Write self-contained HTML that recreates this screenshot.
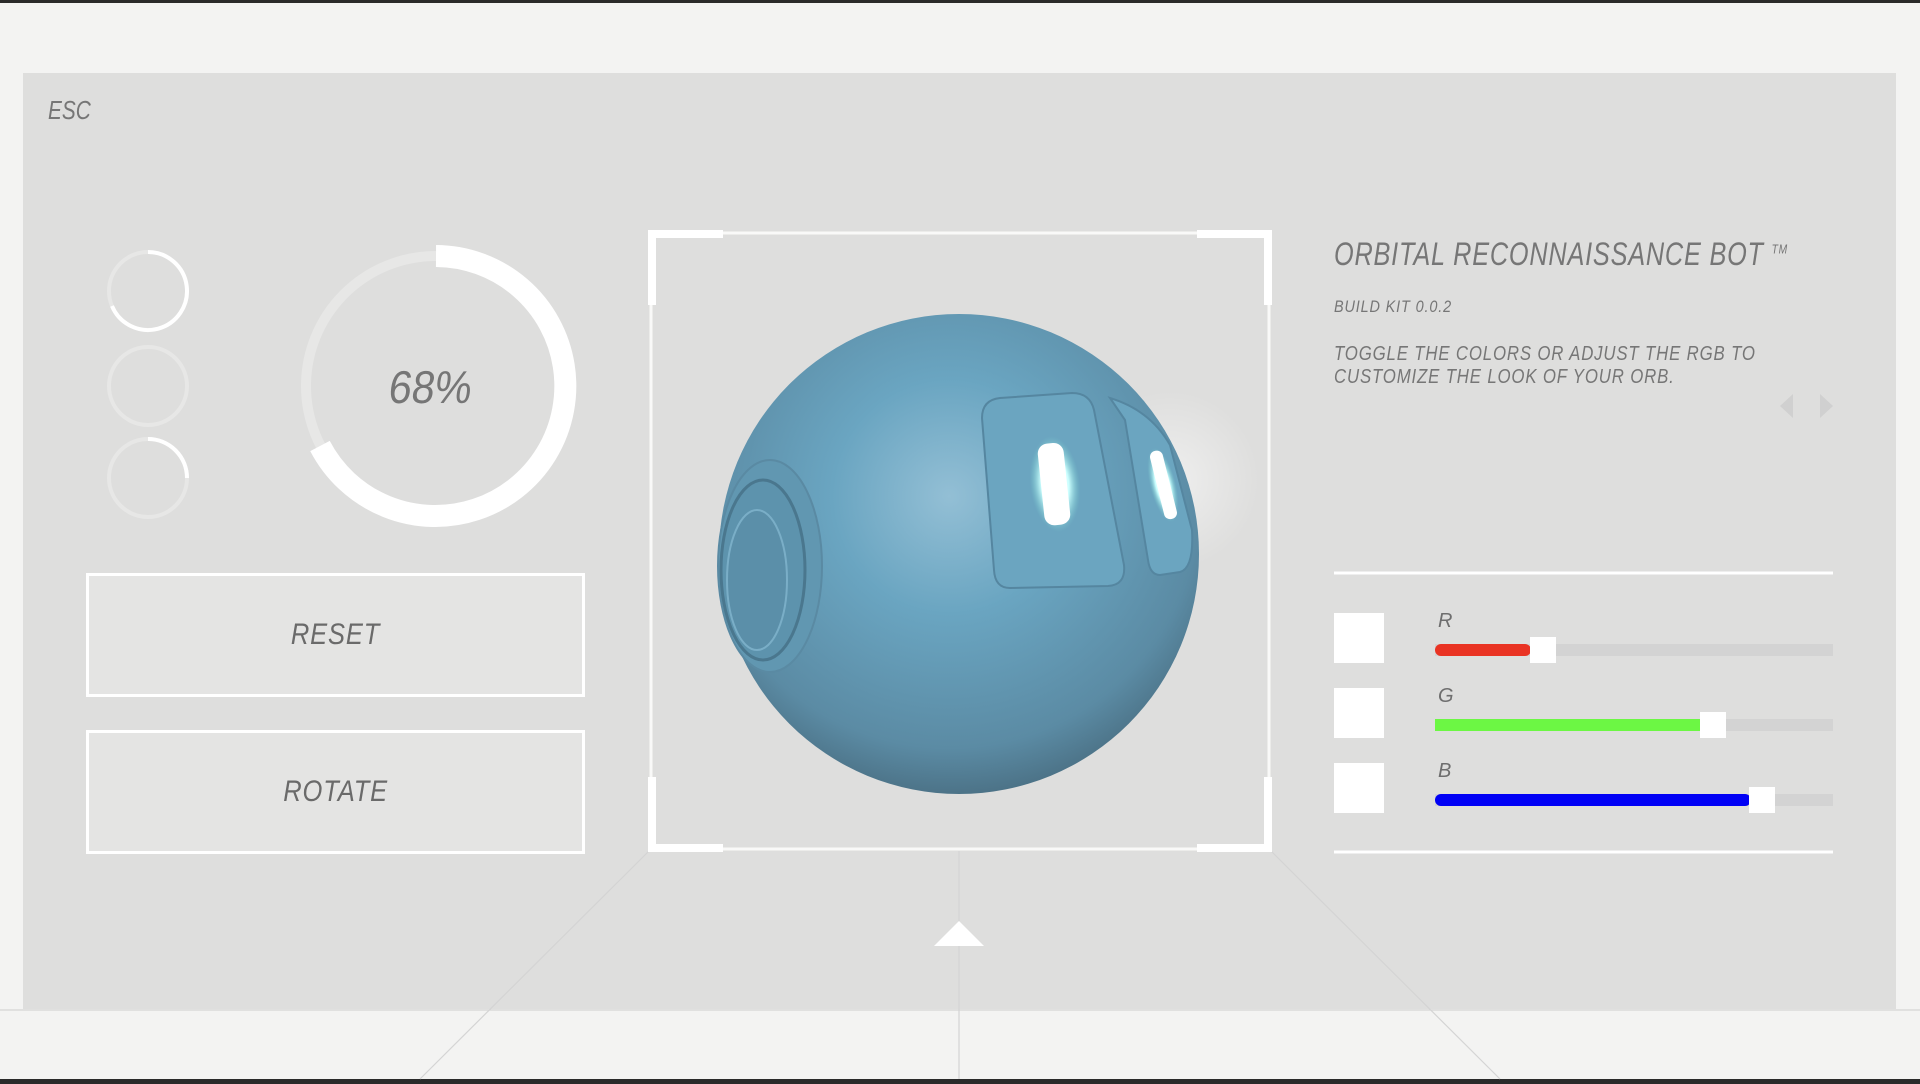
<!DOCTYPE html>
<html><head><meta charset="utf-8"><style>
*{margin:0;padding:0;box-sizing:border-box}
html,body{width:1920px;height:1084px;overflow:hidden;background:#f3f3f2;font-family:"Liberation Sans",sans-serif}
.t{position:absolute;color:#767676;font-style:italic;letter-spacing:2px;white-space:nowrap;transform-origin:left top}
.btn{position:absolute;left:86px;width:499px;height:124px;border:3px solid #fff;background:#e4e4e3;display:flex;align-items:center;justify-content:center;color:#6a6a6a;font-style:italic;font-size:30px;letter-spacing:1px}
.btn span{display:inline-block;transform:scaleX(.85)}
.sq{position:absolute;left:1334px;width:50px;height:50px;background:#fff}
.trk{position:absolute;left:1435px;width:398px;height:12px;background:#d3d3d3}
.fill{position:absolute;left:0;top:0;height:12px;border-radius:6px}
.th{position:absolute;top:-7px;width:26px;height:26px;background:#fff}
.lab{position:absolute;left:1438px;color:#6e6e6e;font-style:italic;font-size:20px}
</style></head><body>
<div style="position:absolute;left:0;top:0;width:1920px;height:3px;background:#2a2a2a"></div>
<div style="position:absolute;left:0;top:1079px;width:1920px;height:5px;background:#2a2a2a"></div>
<div style="position:absolute;left:23px;top:73px;width:1873px;height:936px;background:#dededd"></div>
<svg style="position:absolute;left:0;top:0" width="1920" height="1084">
<g stroke="#d4d4d4" stroke-width="1.2" fill="none">
<line x1="959" y1="851" x2="959" y2="1079"/>
<line x1="0" y1="1010" x2="1920" y2="1010"/>
<line x1="649" y1="851" x2="420" y2="1079"/>
<line x1="1271" y1="851" x2="1500" y2="1079"/>
</g>
<g fill="none" stroke-width="4">
<circle cx="148" cy="291" r="39" stroke="#e7e7e6"/>
<path d="M148 252 A39 39 0 1 1 112 306" stroke="#fff"/>
<circle cx="148" cy="386" r="39" stroke="#e7e7e6"/>
<circle cx="148" cy="478" r="39" stroke="#e7e7e6"/>
<path d="M148 439 A39 39 0 0 1 187 478" stroke="#fff"/>
</g>
<circle cx="436" cy="386" r="130" fill="none" stroke="#e7e7e6" stroke-width="10"/>
<path d="M436 256 A130 130 0 1 1 320 446" fill="none" stroke="#fff" stroke-width="22"/>
<g fill="none" stroke="#fff">
<rect x="651" y="233" width="618" height="616" stroke-width="3" opacity=".8"/>
<path d="M652 305 V234 H723 M1197 234 H1268 V305 M652 777 V848 H723 M1197 848 H1268 V777" stroke-width="8"/>
</g>
<polygon points="959,921 934,946 984,946" fill="#fff"/>
<defs>
<radialGradient id="sp" cx="0.48" cy="0.38" r="0.7">
<stop offset="0" stop-color="#93bfd5"/>
<stop offset="0.35" stop-color="#6aa5c1"/>
<stop offset="0.75" stop-color="#5b8ba4"/>
<stop offset="1" stop-color="#405f70"/>
</radialGradient>
<radialGradient id="gl"><stop offset="0" stop-color="#fff"/><stop offset=".55" stop-color="#cff"/><stop offset="1" stop-color="#7cc" stop-opacity="0"/></radialGradient>
<radialGradient id="halo"><stop offset="0" stop-color="#fff" stop-opacity=".5"/><stop offset="1" stop-color="#fff" stop-opacity="0"/></radialGradient>
</defs>
<circle cx="1170" cy="480" r="90" fill="url(#halo)"/>
<circle cx="959" cy="554" r="240" fill="url(#sp)"/>
<ellipse cx="770" cy="566" rx="52" ry="106" fill="#6197b1" stroke="#5a8aa3" stroke-width="2"/>
<ellipse cx="763" cy="570" rx="42" ry="90" fill="#5d93ad" stroke="#4a778e" stroke-width="3"/>
<ellipse cx="757" cy="580" rx="30" ry="70" fill="#5b8fa9" stroke="#7aaec7" stroke-width="2"/>
<path d="M982 418 Q982 400 1000 398 L1072 393 Q1090 393 1094 410 L1124 565 Q1126 585 1108 586 L1010 588 Q995 588 994 570 Z" fill="#6ba5c0" stroke="#5586a0" stroke-width="2"/>
<path d="M1110 398 Q1150 410 1170 445 L1192 530 Q1194 568 1180 572 L1160 575 Q1150 575 1148 560 L1125 420 Z" fill="#6ba5c0" stroke="#5586a0" stroke-width="2"/>
<rect x="1030" y="436" width="50" height="96" rx="20" fill="url(#gl)" transform="rotate(-6 1055 484)"/>
<rect x="1041" y="443" width="26" height="82" rx="10" fill="#fff" transform="rotate(-6 1055 484)"/>
<rect x="1150" y="447" width="26" height="76" rx="10" fill="url(#gl)" transform="rotate(-14 1163 485)"/>
<rect x="1157" y="450" width="13" height="70" rx="6" fill="#fff" transform="rotate(-14 1163 485)"/>
<line x1="1334" y1="573" x2="1833" y2="573" stroke="#fff" stroke-width="3"/>
<line x1="1334" y1="852" x2="1833" y2="852" stroke="#fff" stroke-width="3"/>
<polygon points="1793,394 1780,406 1793,418" fill="#d0d0d0"/>
<polygon points="1820,394 1833,406 1820,418" fill="#d0d0d0"/>
</svg>
<div class="t" style="left:48px;top:95px;font-size:26px;letter-spacing:0;transform:scaleX(.8)">ESC</div>
<div class="t" style="left:393px;top:360px;font-size:46px;letter-spacing:0;font-style:normal;transform:skewX(-8deg) scaleX(.9)">68%</div>
<div class="btn" style="top:573px"><span>RESET</span></div>
<div class="btn" style="top:730px"><span>ROTATE</span></div>
<div class="t" style="left:1334px;top:236px;font-size:32px;letter-spacing:1px;transform:scaleX(.79)">ORBITAL RECONNAISSANCE BOT <sup style="font-size:13px">TM</sup></div>
<div class="t" style="left:1334px;top:297px;font-size:17px;letter-spacing:1px;transform:scaleX(.85)">BUILD KIT 0.0.2</div>
<div class="t" style="left:1334px;top:343px;font-size:20px;line-height:23px;letter-spacing:1px;transform:scaleX(.84)">TOGGLE THE COLORS OR ADJUST THE RGB TO<br>CUSTOMIZE THE LOOK OF YOUR ORB.</div>
<div class="sq" style="top:613px"></div>
<div class="sq" style="top:688px"></div>
<div class="sq" style="top:763px"></div>
<div class="lab" style="top:610px">R</div>
<div class="lab" style="top:685px">G</div>
<div class="lab" style="top:760px">B</div>
<div class="trk" style="top:644px"><div class="fill" style="width:96px;background:#e93323"></div><div class="th" style="left:95px"></div></div>
<div class="trk" style="top:719px"><div class="fill" style="width:266px;background:#6cf744;border-radius:0"></div><div class="th" style="left:265px"></div></div>
<div class="trk" style="top:794px"><div class="fill" style="width:316px;background:#0000f5"></div><div class="th" style="left:314px"></div></div>
</body></html>
